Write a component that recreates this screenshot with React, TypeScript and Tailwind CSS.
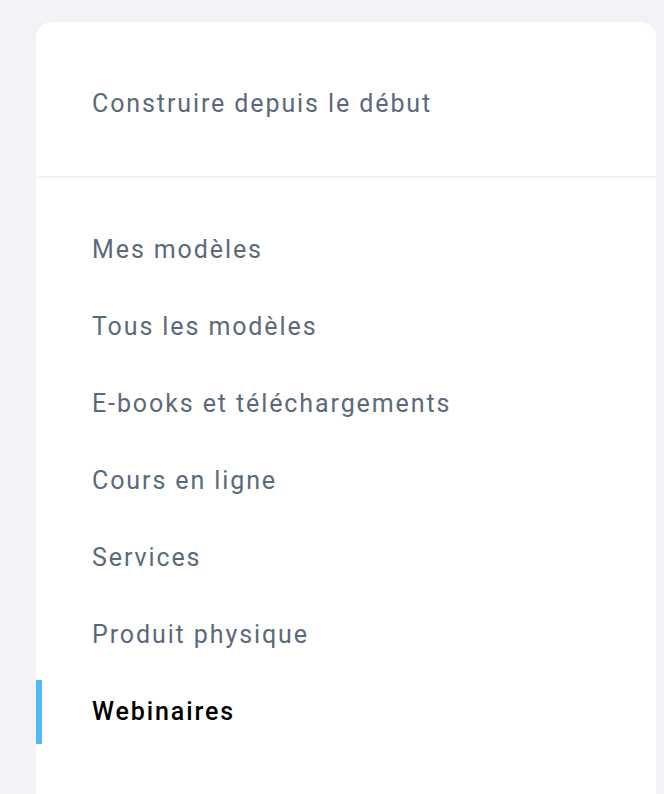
import React from "react";

const items = [
  "Mes modèles",
  "Tous les modèles",
  "E-books et téléchargements",
  "Cours en ligne",
  "Services",
  "Produit physique",
  "Webinaires",
];

const App = () => {
  const active = "Webinaires";
  return (
    <div className="min-h-[794px] bg-[#f2f3f7] pl-[36px] pr-[8px] pt-[22px] font-['Roboto',sans-serif]">
      <div className="bg-white rounded-t-[16px] min-h-[772px]">
        <div className="pt-[50px] pb-[40px]">
          <div className="h-[64px] flex items-center pl-[56px] text-[25px] tracking-[1.9px] text-[#5b6a7b]">
            Construire depuis le début
          </div>
        </div>
        <div className="h-[2px] bg-[#f1f2f5]" />
        <nav className="pt-[40px] flex flex-col gap-[13px]">
          {items.map((label) => {
            const isActive = label === active;
            return (
              <div
                key={label}
                className={
                  isActive
                    ? "h-[64px] flex items-center pl-[50px] border-l-[6px] border-[#4fb8f7] text-[25px] tracking-[1.9px] font-medium text-black"
                    : "h-[64px] flex items-center pl-[56px] text-[25px] tracking-[1.9px] text-[#5b6a7b]"
                }
              >
                {label}
              </div>
            );
          })}
        </nav>
      </div>
    </div>
  );
};

export default App;
